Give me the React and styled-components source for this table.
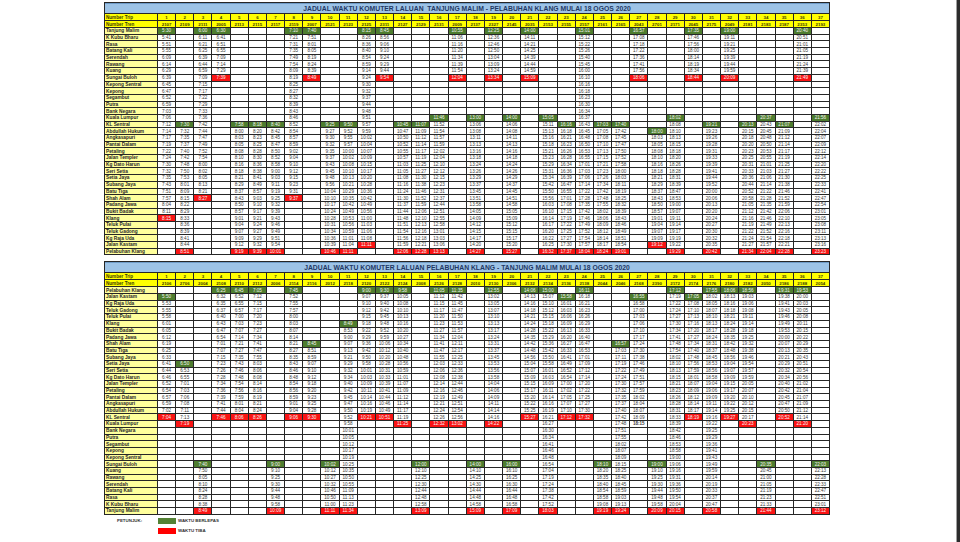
import React from "react";
import styled, { createGlobalStyle } from "styled-components";

const GlobalStyle = createGlobalStyle`
  *, *::before, *::after { box-sizing: border-box; }
  html, body { margin: 0; padding: 0; background: #fff; }
  body { font-family: "Liberation Sans", Arial, sans-serif; }
`;

const Page = styled.div`
  display: flex;
  width: 960px;
  height: 542px;
  overflow: hidden;
  background: #fff;
`;

const Sheet = styled.div`
  flex: 1;
  padding: 2px 0 0 104px;
  display: flex;
  flex-direction: column;
`;

const Tables = styled.div`
  display: flex;
  flex-direction: column;
  gap: 6px;
`;

const Edge = styled.div`
  width: 4px;
  background: #2c2c2c;
  border-left: 1px solid #a0a0a0;
`;

const Grid = styled.div`
  display: grid;
  width: 726px;
  grid-template-columns: 52px repeat(37, 1fr);
  grid-template-rows: 10px 6px 6px;
  grid-auto-rows: 5.7px;
  gap: 1px;
  background: #262626;
  border: 1px solid #262626;
`;

const Title = styled.div`
  grid-column: 1 / -1;
  background: #9dc3e6;
  border-top: 1px solid #6f9cc8;
  color: #1f3864;
  font-weight: 700;
  font-size: 6.8px;
  line-height: 9px;
  text-align: center;
  white-space: pre;
`;

const HeadLabel = styled.div`
  background: #ffff00;
  color: #3b3b00;
  font-weight: 700;
  font-size: 4.6px;
  display: flex;
  align-items: center;
  padding-left: 1px;
  white-space: nowrap;
`;

const HeadCell = styled.div`
  background: #ffff00;
  color: #3b3b00;
  font-weight: 700;
  font-size: 4.4px;
  display: flex;
  align-items: center;
  justify-content: center;
`;

const Station = styled.div`
  background: #ffff9c;
  color: #2a2a2a;
  font-weight: 700;
  font-size: 4.8px;
  display: flex;
  align-items: center;
  padding-left: 1px;
  white-space: nowrap;
  overflow: hidden;
`;

const kindBg = { dep: "#4e7d2f", arr: "#fa1414" };

const TimeCell = styled.div`
  background: ${(p) => kindBg[p.$kind] || "#fff"};
  color: ${(p) => (kindBg[p.$kind] ? "#f4f4f4" : "#3a3a3a")};
  font-weight: ${(p) => (p.$bold ? 700 : 400)};
  font-size: 4.6px;
  display: flex;
  align-items: center;
  justify-content: center;
  white-space: nowrap;
`;

const Legend = styled.div`
  display: grid;
  grid-template-columns: 39px 18px auto;
  grid-auto-rows: 6px;
  row-gap: 4px;
  column-gap: 2px;
  align-items: center;
  margin: 3px 0 0 13px;
  font-size: 4.4px;
  font-weight: 700;
  color: #333;
`;

const Swatch = styled.div`
  height: 6px;
  background: ${(p) => p.$color};
`;

const stationsDown = [
  "Tanjung Malim", "K Kubu Bharu", "Rasa", "Batang Kali", "Serendah", "Rawang",
  "Kuang", "Sungai Buloh", "Kepong Sentral", "Kepong", "Segambut", "Putra",
  "Bank Negara", "Kuala Lumpur", "KL Sentral", "Abdullah Hukum", "Angkasapuri",
  "Pantai Dalam", "Petaling", "Jalan Templer", "Kg Dato Harun", "Seri Setia",
  "Setia Jaya", "Subang Jaya", "Batu Tiga", "Shah Alam", "Padang Jawa",
  "Bukit Badak", "Klang", "Teluk Pulai", "Teluk Gadong", "Kg Raja Uda",
  "Jalan Kastam", "Pelabuhan Klang",
];
const stationsUp = [...stationsDown].reverse();

// minutes from Tanjung Malim
const cumDown = [0, 11, 21, 25, 39, 44, 59, 69, 75, 77, 82, 89, 93, 96, 102, 104, 107,
  109, 112, 114, 120, 122, 125, 133, 141, 147, 154, 161, 165, 168, 171, 173, 176, 183];
const cumUp = cumDown.map((_, i) => 183 - cumDown[33 - i]);

const tripsDown = [
  ["2107", 0, "5:30", 28], ["2109", 14, "7:30", 33], ["2111", 0, "6:00", 25],
  ["2005", 0, "6:30", 7], ["2113", 14, "7:58", 33], ["2115", 14, "8:18", 33],
  ["2117", 14, "8:40", 33], ["2119", 0, "7:10", 25], ["2007", 0, "7:40", 7],
  ["2121", 14, "9:25", 33], ["2123", 14, "9:50", 33], ["2125", 0, "8:15", 32],
  ["2311", 0, "8:45", 7], ["2127", 14, "10:45", 33], ["2129", 14, "11:07", 33],
  ["2131", 13, "11:46", 33], ["2009", 0, "10:55", 7], ["2137", 13, "13:00", 33],
  ["2327", 0, "12:25", 7], ["2145", 13, "14:00", 33], ["2035", 0, "14:00", 7],
  ["2153", 13, "15:05", 33], ["2155", 14, "16:16", 33], ["2157", 0, "15:01", 33],
  ["2161", 14, "17:03", 33], ["2165", 14, "17:40", 33], ["2043", 0, "16:57", 7],
  ["2701", 15, "18:00", 32], ["2171", 13, "18:02", 33], ["2045", 0, "17:35", 7],
  ["2175", 14, "19:21", 33], ["2049", 0, "19:00", 7], ["2181", 14, "20:13", 33],
  ["2183", 13, "20:37", 33], ["2187", 14, "21:07", 33], ["2353", 0, "20:40", 7],
  ["2193", 13, "21:56", 33],
];

const tripsUp = [
  ["2106", 1, "5:50", 19], ["2706", 11, "6:50", 20], ["2004", 26, "7:40", 33],
  ["2108", 0, "6:25", 19], ["2110", 0, "6:45", 19], ["2112", 0, "7:05", 19],
  ["2006", 26, "9:00", 33], ["2114", 0, "7:45", 19], ["2116", 8, "8:45", 19],
  ["2012", 26, "10:02", 33], ["2118", 5, "8:49", 33], ["2120", 0, "9:00", 19],
  ["2122", 0, "9:30", 19], ["2124", 0, "9:58", 20], ["2008", 26, "12:00", 33],
  ["2126", 0, "11:05", 20], ["2128", 0, "11:35", 20], ["2010", 26, "14:00", 33],
  ["2130", 0, "12:55", 20], ["2306", 26, "16:00", 33], ["2132", 0, "14:06", 19],
  ["2134", 0, "15:00", 33], ["2136", 1, "15:58", 19], ["2138", 0, "16:11", 19],
  ["2044", 26, "18:10", 33], ["2046", 8, "16:57", 33], ["2168", 1, "16:55", 20, true],
  ["2390", 26, "19:00", 33], ["2172", 0, "17:12", 33], ["2174", 1, "17:05", 19],
  ["2176", 0, "17:55", 33], ["2180", 0, "18:06", 19], ["2182", 0, "18:56", 20],
  ["2050", 26, "20:35", 33], ["2186", 0, "19:31", 19], ["2188", 0, "19:53", 20],
  ["2054", 26, "22:03", 33],
];

const toMin = (s) => {
  const [h, m] = s.split(":").map(Number);
  return h * 60 + m;
};
const fmt = (min) => {
  const h = Math.floor(min / 60) % 24;
  const m = min % 60;
  return `${h}:${String(m).padStart(2, "0")}`;
};

function cellFor(trip, row, cum) {
  const [, start, time, end, plainEnd] = trip;
  if (row < start || row > end) return { text: "" };
  const text = fmt(toMin(time) + cum[row] - cum[start]);
  if (row === start) return { text, kind: "dep" };
  if (row === end) return plainEnd ? { text, bold: true } : { text, kind: "arr" };
  return { text };
}

function Timetable({ title, stations, cum, trips }) {
  return (
    <Grid>
      <Title>{title}</Title>
      <HeadLabel>Number Trip</HeadLabel>
      {trips.map((_, i) => (
        <HeadCell key={`n${i}`}>{i + 1}</HeadCell>
      ))}
      <HeadLabel>Number Tren</HeadLabel>
      {trips.map((t, i) => (
        <HeadCell key={`t${i}`}>{t[0]}</HeadCell>
      ))}
      {stations.map((name, r) => (
        <React.Fragment key={name}>
          <Station>{name}</Station>
          {trips.map((t, c) => {
            const cell = cellFor(t, r, cum);
            return (
              <TimeCell key={c} $kind={cell.kind} $bold={cell.bold}>
                {cell.text}
              </TimeCell>
            );
          })}
        </React.Fragment>
      ))}
    </Grid>
  );
}

export default function App() {
  return (
    <Page>
      <GlobalStyle />
      <Sheet>
        <Tables>
          <Timetable
            title="JADUAL WAKTU KOMUTER LALUAN  TANJUNG MALIM - PELABUHAN KLANG MULAI 18 OGOS 2020"
            stations={stationsDown}
            cum={cumDown}
            trips={tripsDown}
          />
          <Timetable
            title="JADUAL WAKTU KOMUTER LALUAN PELABUHAN KLANG - TANJUNG MALIM MULAI 18 OGOS 2020"
            stations={stationsUp}
            cum={cumUp}
            trips={tripsUp}
          />
        </Tables>
        <Legend>
          <span>PETUNJUK:</span>
          <Swatch $color="#548235" />
          <span>WAKTU BERLEPAS</span>
          <span />
          <Swatch $color="#ff0000" />
          <span>WAKTU TIBA</span>
        </Legend>
      </Sheet>
      <Edge />
    </Page>
  );
}
